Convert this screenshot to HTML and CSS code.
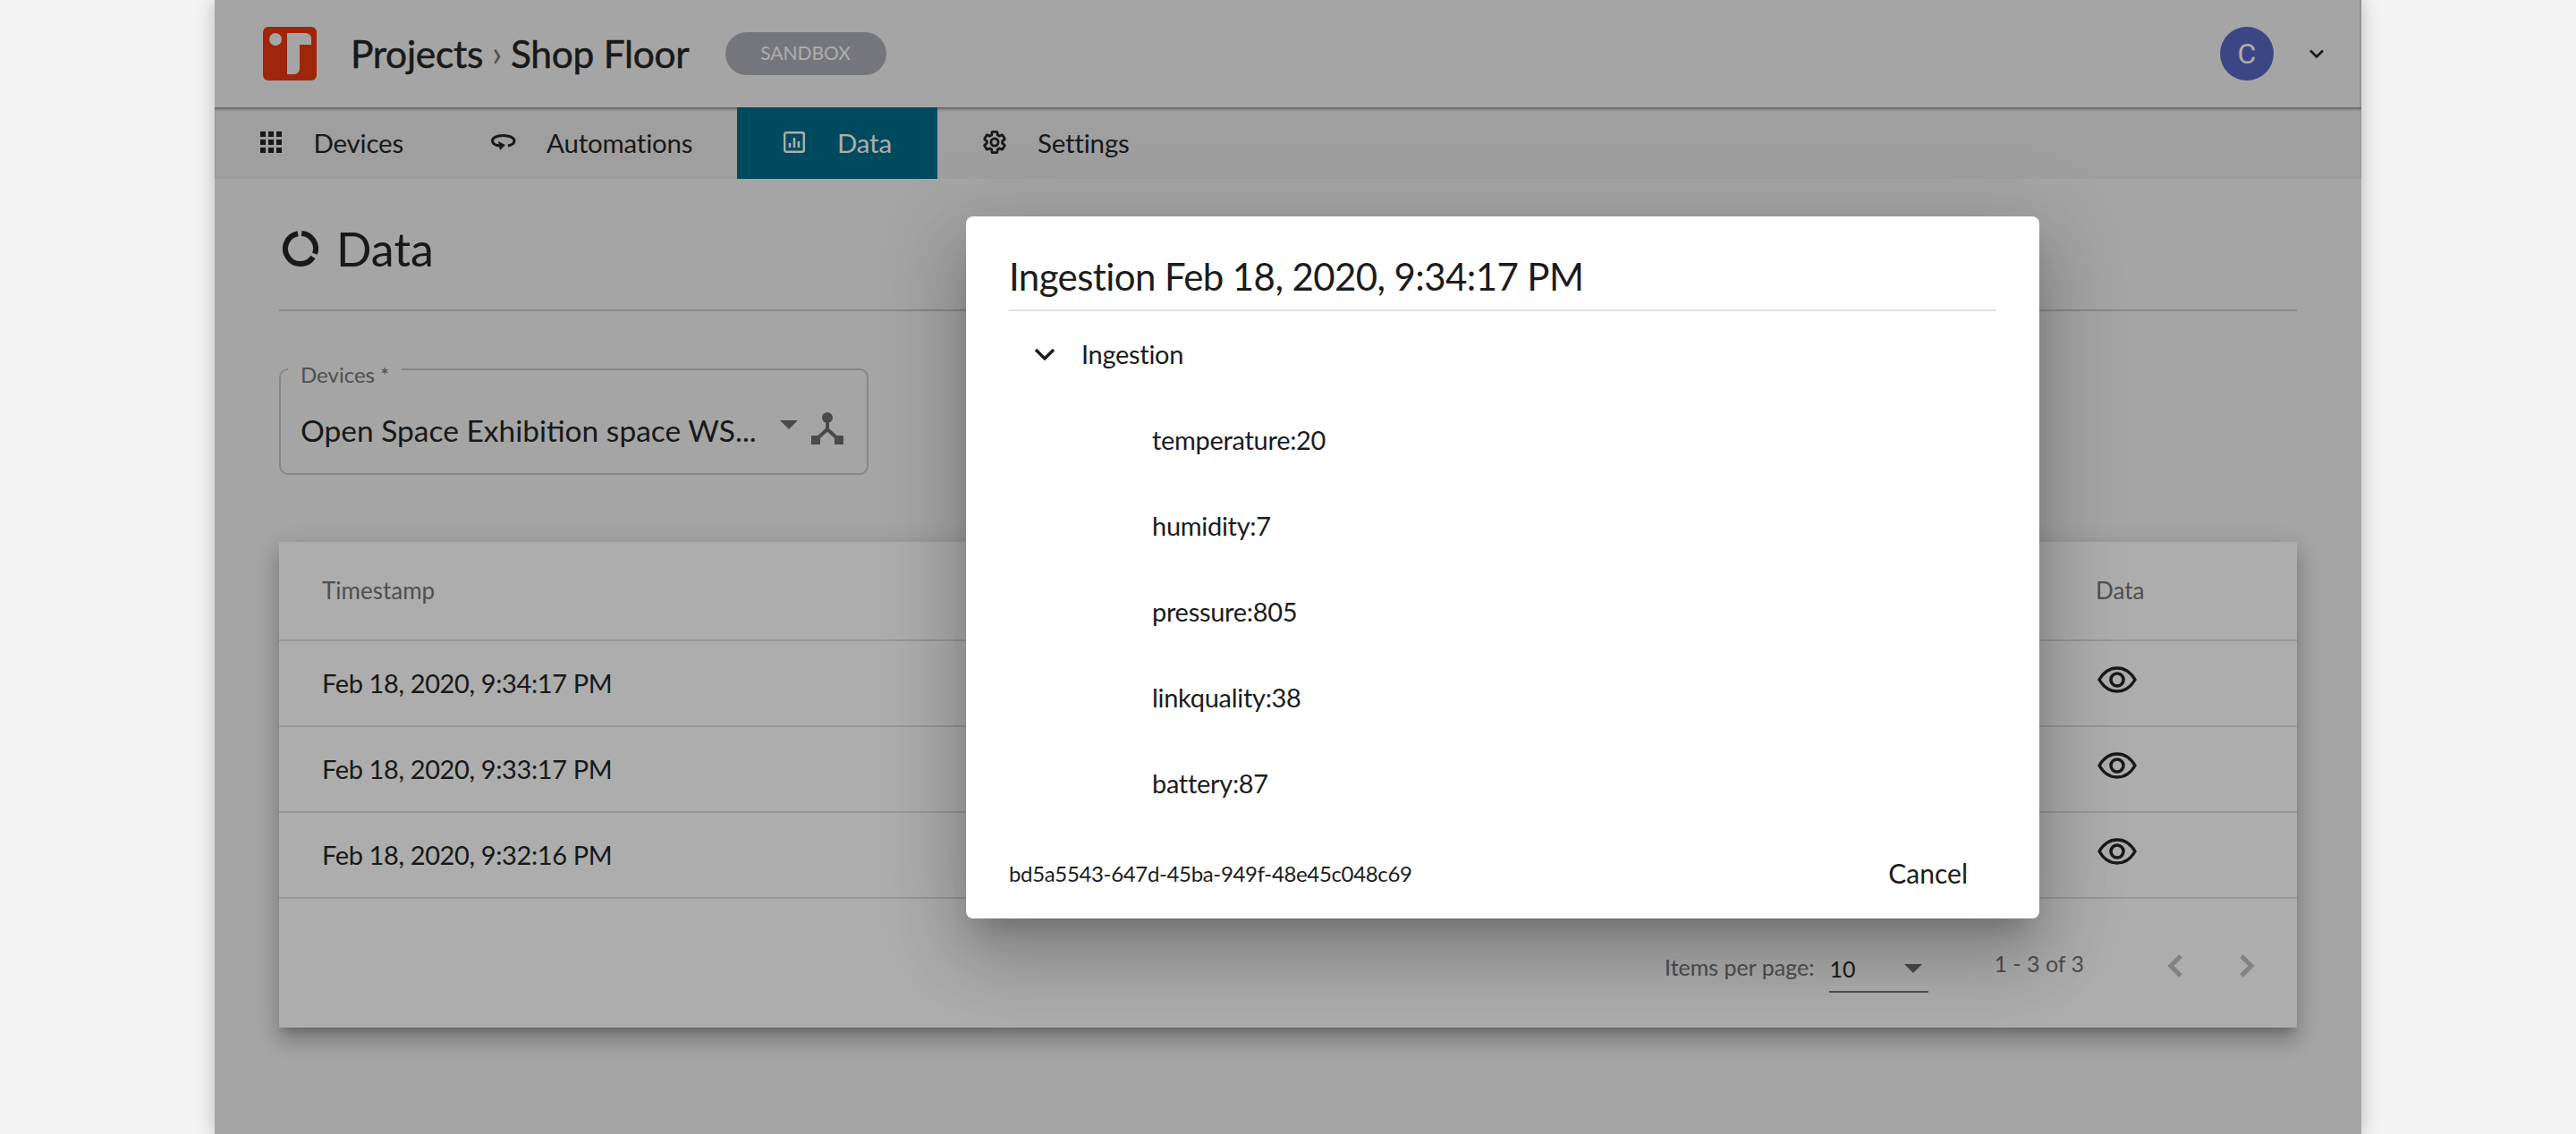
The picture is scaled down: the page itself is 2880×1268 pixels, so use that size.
FILE: index.html
```html
<!DOCTYPE html>
<html lang="en">
<head>
    <meta charset="UTF-8">
    <title>Data</title>
    <link rel="stylesheet" href="styles.css">
</head>
<body>
    <div class="app">
        <div class="topbar">
            <svg class="logo" viewBox="0 0 60 60">
                <rect width="60" height="60" rx="6" fill="#eb380f"/>
                <circle cx="14" cy="14" r="7" fill="#f4f4f4"/>
                <path d="M27 7H48a6 6 0 0 1 6 6V20H41V47a6 6 0 0 1 -6 6H27z" fill="#f4f4f4"/>
            </svg>
            <div class="crumbs">
                <span>Projects</span>
                <span class="crumb-sep">›</span>
                <span>Shop Floor</span>
            </div>
            <span class="env-pill">SANDBOX</span>
            <div class="user">
                <span class="avatar">C</span>
                <svg class="user-arrow" viewBox="0 0 16 10"><path d="M1 1.5L8 8.5L15 1.5" fill="none" stroke="#262626" stroke-width="2.6"/></svg>
            </div>
        </div>

        <div class="tabs">
            <a class="tab tab-devices">
                <span class="tab-icon">
                    <svg viewBox="0 0 24 24" width="24" height="24" fill="#262626">
                        <rect x="0" y="0" width="6" height="6"/><rect x="9" y="0" width="6" height="6"/><rect x="18" y="0" width="6" height="6"/>
                        <rect x="0" y="9" width="6" height="6"/><rect x="9" y="9" width="6" height="6"/><rect x="18" y="9" width="6" height="6"/>
                        <rect x="0" y="18" width="6" height="6"/><rect x="9" y="18" width="6" height="6"/><rect x="18" y="18" width="6" height="6"/>
                    </svg>
                </span>
                Devices
            </a>
            <a class="tab tab-automations">
                <span class="tab-icon">
                    <svg viewBox="0 0 28 18" width="28" height="18">
                        <path d="M19 13C23.500 12 26 10 26 7.500C26 4 20.500 1.500 13.500 1.500C6.500 1.500 1.500 4 1.500 7.500C1.500 10.500 5 12.500 10 13" fill="none" stroke="#262626" stroke-width="3"/>
                        <path d="M8 8L16 12L10 18z" fill="#262626"/>
                    </svg>
                </span>
                Automations
            </a>
            <a class="tab tab-active">
                <span class="tab-icon">
                    <svg viewBox="0 0 24 24" width="24" height="24" fill="none" stroke="#ffffff">
                        <rect x="1.200" y="1.200" width="21.600" height="21.600" rx="2" stroke-width="2.400"/>
                        <path d="M7 18V13M12 18V7M17 18V11" stroke-width="2.600"/>
                    </svg>
                </span>
                Data
            </a>
            <a class="tab">
                <span class="tab-icon">
                    <svg viewBox="0 0 24 24" width="28" height="28" fill="none" stroke="#262626" stroke-width="2.400">
                        <path d="M19.430 12.980c.040-.320.070-.640.070-.980 0-.340-.030-.660-.070-.980l2.110-1.650c.190-.150.240-.420.120-.640l-2-3.460c-.120-.220-.390-.300-.610-.220l-2.490 1c-.520-.400-1.080-.730-1.690-.980l-.380-2.650C14.460 2.180 14.250 2 14 2h-4c-.250 0-.460.180-.490.420l-.380 2.650c-.610.250-1.170.590-1.690.980l-2.490-1c-.230-.090-.490 0-.610.220l-2 3.460c-.130.220-.070.490.120.640l2.110 1.650c-.040.320-.070.650-.070.980 0 .330.030.660.070.980l-2.110 1.650c-.190.150-.240.420-.120.640l2 3.460c.120.220.390.300.610.220l2.490-1c.520.400 1.080.730 1.690.980l.380 2.650c.030.240.240.420.490.420h4c.250 0 .460-.180.490-.420l.380-2.650c.610-.250 1.170-.590 1.690-.980l2.490 1c.230.090.490 0 .610-.220l2-3.460c.120-.220.070-.490-.120-.640l-2.110-1.650z"/>
                        <circle cx="12" cy="12" r="3.500"/>
                    </svg>
                </span>
                Settings
            </a>
        </div>

        <div class="content">
            <div class="page-title">
                <svg viewBox="0 0 40 40" width="40" height="40" fill="none" stroke="#262626" stroke-width="6">
                    <path d="M21.200 3A17 17 0 0 1 36 25.800M34.100 29.500A17 17 0 1 1 17 3.300"/>
                </svg>
                <h1>Data</h1>
            </div>

            <div class="field">
                <span class="field-label">Devices *</span>
                <span class="field-value">Open Space Exhibition space WS...</span>
                <span class="select-arrow"></span>
                <svg class="field-icon" viewBox="0 0 36 36" width="36" height="36" fill="#6d6d6d">
                    <circle cx="18" cy="6" r="6"/>
                    <rect x="0" y="26" width="10" height="10"/><rect x="26" y="26" width="10" height="10"/>
                    <path d="M18 10V19L6 30M18 19L30 30" fill="none" stroke="#6d6d6d" stroke-width="4"/>
                </svg>
            </div>

            <div class="card">
                <div class="row row-head">
                    <span>Timestamp</span>
                    <span class="col-data">Data</span>
                </div>
                <div class="row">
                    <span>Feb 18, 2020, 9:34:17 PM</span>
                    <span class="col-data"><svg class="eye" viewBox="0 0 44 30"><path d="M2 15C7 6.500 14 2 22 2C30 2 37 6.500 42 15C37 23.500 30 28 22 28C14 28 7 23.500 2 15z" fill="none" stroke="#262626" stroke-width="3.400"/><circle cx="22" cy="15" r="7" fill="none" stroke="#262626" stroke-width="3.600"/></svg></span>
                </div>
                <div class="row">
                    <span>Feb 18, 2020, 9:33:17 PM</span>
                    <span class="col-data"><svg class="eye" viewBox="0 0 44 30"><path d="M2 15C7 6.500 14 2 22 2C30 2 37 6.500 42 15C37 23.500 30 28 22 28C14 28 7 23.500 2 15z" fill="none" stroke="#262626" stroke-width="3.400"/><circle cx="22" cy="15" r="7" fill="none" stroke="#262626" stroke-width="3.600"/></svg></span>
                </div>
                <div class="row">
                    <span>Feb 18, 2020, 9:32:16 PM</span>
                    <span class="col-data"><svg class="eye" viewBox="0 0 44 30"><path d="M2 15C7 6.500 14 2 22 2C30 2 37 6.500 42 15C37 23.500 30 28 22 28C14 28 7 23.500 2 15z" fill="none" stroke="#262626" stroke-width="3.400"/><circle cx="22" cy="15" r="7" fill="none" stroke="#262626" stroke-width="3.600"/></svg></span>
                </div>
                <div class="paginator">
                    <span class="page-label">Items per page:</span>
                    <div class="page-select">
                        <span>10</span>
                        <span class="select-arrow"></span>
                    </div>
                    <span class="page-range">1 - 3 of 3</span>
                    <svg class="page-btn page-prev" viewBox="0 0 17 26"><path d="M15 2L4 13L15 24" fill="none" stroke="#c0c0c0" stroke-width="5"/></svg>
                    <svg class="page-btn page-next" viewBox="0 0 17 26"><path d="M2 2L13 13L2 24" fill="none" stroke="#c0c0c0" stroke-width="5"/></svg>
                </div>
            </div>
        </div>

        <div class="backdrop"></div>

        <div class="dialog">
            <h2>Ingestion Feb 18, 2020, 9:34:17 PM</h2>
            <div class="tree-head">
                <svg viewBox="0 0 24 14" width="24" height="14"><path d="M2 2L12 12L22 2" fill="none" stroke="#1c1c1c" stroke-width="3.400"/></svg>
                <span>Ingestion</span>
            </div>
            <div class="tree-item">temperature:20</div>
            <div class="tree-item">humidity:7</div>
            <div class="tree-item">pressure:805</div>
            <div class="tree-item">linkquality:38</div>
            <div class="tree-item">battery:87</div>
            <div class="dialog-foot">
                <span class="uuid">bd5a5543-647d-45ba-949f-48e45c048c69</span>
                <a class="cancel">Cancel</a>
            </div>
        </div>
    </div>
</body>
</html>
```

FILE: styles.css
```css
* {
    box-sizing: border-box;
}

body {
    margin: 0;
    background-color: #f4f4f4;
    font-family: Lato, "Noto Sans", sans-serif;
    color: #262626;
}

h1, h2 {
    margin: 0;
    font-weight: 400;
}

.app {
    position: relative;
    width: 2400px;
    height: 1268px;
    margin: 0 auto;
    overflow: hidden;
    background-color: #f4f4f4;
    box-shadow: 0 0 20px rgba(0, 0, 0, 0.25);
}

.backdrop {
    position: absolute;
    top: 0;
    left: 0;
    right: 0;
    bottom: 0;
    background-color: rgba(0, 0, 0, 0.32);
}

/* top bar */
.topbar {
    display: flex;
    align-items: center;
    height: 120px;
    padding: 0 40px 0 54px;
    border-right: 2px solid #d8d8d8;
}

.logo {
    width: 60px;
    height: 60px;
}

.crumbs {
    display: flex;
    align-items: center;
    gap: 10px;
    margin-left: 38px;
    padding-bottom: 2px;
    font-size: 42.5px;
    letter-spacing: -0.3px;
    -webkit-text-stroke: 0.5px #262626;
}

.crumb-sep {
    color: #777;
    font-size: 40px;
    -webkit-text-stroke: 0;
}

.env-pill {
    display: flex;
    align-items: center;
    justify-content: center;
    width: 180px;
    height: 48px;
    margin-left: 40px;
    padding-bottom: 3px;
    border-radius: 24px;
    background-color: #adafb5;
    color: #fff;
    font-size: 21px;
}

.user {
    display: flex;
    align-items: center;
    margin-left: auto;
}

.avatar {
    display: flex;
    align-items: center;
    justify-content: center;
    width: 60px;
    height: 60px;
    border-radius: 50%;
    background-color: #5769c3;
    color: #fff;
    font-family: Roboto, sans-serif;
    font-size: 32px;
}

.user-arrow {
    width: 16px;
    height: 10px;
    margin-left: 40px;
}

/* tabs */
.tabs {
    display: flex;
    height: 80px;
    background-color: #ebebeb;
    box-shadow: inset 0 3px 3px -1px rgba(0, 0, 0, 0.4);
}

.tab {
    display: flex;
    align-items: center;
    padding: 0 48px 2px;
    font-size: 29.5px;
    letter-spacing: -0.2px;
}

.tab-devices {
    width: 259px;
}

.tab-automations {
    width: 325px;
}

.tab-icon {
    display: flex;
    align-items: center;
    justify-content: center;
    width: 32px;
    margin-right: 32px;
}

.tab-active {
    width: 224px;
    background-color: #006d8e;
    color: #fff;
}

/* page */
.content {
    padding: 0 72px;
}

.page-title {
    display: flex;
    align-items: center;
    gap: 20px;
    height: 148px;
    padding: 10px 4px 0;
    border-bottom: 2px solid #c8c8c8;
}

.page-title h1 {
    font-size: 52px;
}

.field {
    position: relative;
    display: flex;
    align-items: center;
    width: 659px;
    height: 119px;
    margin-top: 64px;
    padding: 18px 24px 0 22px;
    border: 2px solid #c8c8c8;
    border-radius: 10px;
}

.field-label {
    position: absolute;
    top: -10px;
    left: 8px;
    padding: 0 14px;
    background-color: #f4f4f4;
    color: #757575;
    font-size: 24px;
}

.field-value {
    font-size: 33.5px;
}

.select-arrow {
    width: 0;
    height: 0;
    border-left: 10px solid transparent;
    border-right: 10px solid transparent;
    border-top: 10px solid #6d6d6d;
}

.field .select-arrow {
    margin: -12px 0 0 auto;
}

.field-icon {
    margin: -4px 2px 0 15px;
}

.card {
    height: 543px;
    margin-top: 75px;
    background-color: #fff;
    box-shadow: 0 10px 10px -6px rgba(0, 0, 0, 0.2), 0 16px 20px 2px rgba(0, 0, 0, 0.14), 0 6px 28px 4px rgba(0, 0, 0, 0.12);
}

.row {
    display: flex;
    align-items: center;
    justify-content: space-between;
    height: 96px;
    padding: 0 0 2px 48px;
    border-bottom: 2px solid #ddd;
    font-size: 29px;
    letter-spacing: -0.38px;
}

.row-head {
    height: 111px;
    padding-bottom: 2px;
    color: #757575;
    font-size: 26px;
    letter-spacing: 0;
}

.col-data {
    width: 225px;
}

.eye {
    display: block;
    width: 44px;
    height: 30px;
    margin: -6px 0 0 2px;
}

.paginator {
    display: flex;
    align-items: center;
    height: 144px;
    padding-top: 8px;
    padding-left: 1549px;
    color: #757575;
    font-size: 25px;
}

.page-select {
    display: flex;
    align-items: center;
    justify-content: space-between;
    width: 111px;
    height: 52px;
    margin-left: 17px;
    margin-top: 6px;
    padding-right: 7px;
    border-bottom: 2px solid #757575;
    color: #262626;
}

.page-range {
    margin-left: 73px;
    margin-top: -8px;
}

.page-btn {
    width: 17px;
    height: 26px;
    margin-top: -2px;
}

.page-prev {
    margin-left: 93px;
}

.page-next {
    margin-left: 64px;
}

/* dialog */
.dialog {
    position: absolute;
    left: 840px;
    top: 242px;
    display: flex;
    flex-direction: column;
    width: 1200px;
    height: 785px;
    padding: 0 48px;
    border-radius: 8px;
    background-color: #fff;
    color: #1c1c1c;
    box-shadow: 0 22px 30px -14px rgba(0, 0, 0, 0.2), 0 48px 76px 6px rgba(0, 0, 0, 0.14), 0 18px 92px 16px rgba(0, 0, 0, 0.12);
}

.dialog h2 {
    height: 106px;
    padding-top: 41px;
    border-bottom: 2px solid #e0e0e0;
    font-size: 42px;
    line-height: 52px;
    letter-spacing: -0.6px;
}

.tree-head {
    display: flex;
    align-items: center;
    gap: 29px;
    height: 95px;
    padding-left: 28px;
    font-size: 29px;
    letter-spacing: -0.3px;
}

.tree-item {
    display: flex;
    align-items: center;
    height: 96px;
    padding-left: 160px;
    font-size: 29px;
    letter-spacing: -0.3px;
}

.dialog-foot {
    display: flex;
    align-items: center;
    justify-content: space-between;
    margin-top: 35px;
    padding-right: 32px;
}

.uuid {
    font-size: 24px;
    letter-spacing: -0.35px;
}

.cancel {
    font-size: 30px;
}
```
